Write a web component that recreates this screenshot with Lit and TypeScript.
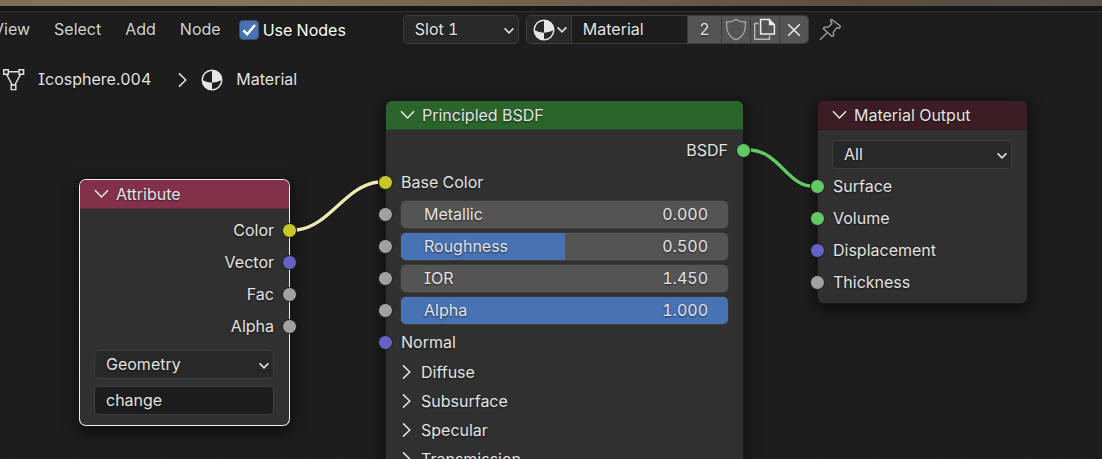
import { LitElement, html, svg, css, nothing } from "lit";
import { customElement, property } from "lit/decorators.js";
import { classMap } from "lit/directives/class-map.js";

type SocketKind = "color" | "vector" | "value" | "shader";

const base = css`
  *,
  *::before,
  *::after {
    box-sizing: border-box;
  }
  button,
  input,
  select {
    margin: 0;
    font: inherit;
    font-feature-settings: inherit;
    color: inherit;
    text-shadow: inherit;
    border-radius: 0;
  }
  button {
    padding: 0;
    border: 0;
    background: none;
    cursor: pointer;
  }
  svg {
    display: block;
    flex: none;
  }
`;

const materialIcon = html`<svg width="22" height="22" viewBox="0 0 22 22" aria-hidden="true">
  <circle cx="11" cy="11" r="9.8" fill="none" stroke="#e6e6e6" stroke-width="1.4" />
  <path d="M11 1.2A9.8 9.8 0 0 1 20.8 11 Q16 13.6 11 13.8Z" fill="#e6e6e6" />
  <path d="M11 20.8A9.8 9.8 0 0 1 1.2 11 Q6 13.6 11 13.8Z" fill="#e6e6e6" />
</svg>`;

const chevron = html`<svg width="12" height="8" viewBox="0 0 12 8" aria-hidden="true">
  <path d="M1.6 1.4 6 5.8 10.4 1.4" fill="none" stroke="#e0e0e0" stroke-width="1.6" />
</svg>`;

/** Drop-down with the editor's own arrow. */
@customElement("ui-dropdown")
export class UiDropdown extends LitElement {
  @property() label = "";
  @property({ type: Array }) options: string[] = [];

  static styles = [
    base,
    css`
      :host {
        display: grid;
        align-items: center;
      }
      .select {
        grid-area: 1 / 1;
        width: 100%;
        height: 29px;
        padding: 0 28px 2px 11px;
        appearance: none;
        color: #e3e3e3;
        background: #282828;
        border: 1px solid #3d3d3d;
        border-radius: 5px;
      }
      .arrow {
        grid-area: 1 / 1;
        justify-self: end;
        margin-right: 4px;
        padding-top: 2px;
        pointer-events: none;
      }
    `,
  ];

  render() {
    return html`<select class="select" aria-label=${this.label}>
        ${this.options.map((o) => html`<option>${o}</option>`)}
      </select>
      <span class="arrow">${chevron}</span>`;
  }
}

/** One row of a node: a socket on its edge and a label or a value field. */
@customElement("node-row")
export class NodeRow extends LitElement {
  @property() kind: SocketKind = "value";
  @property() label = "";
  @property() value = "";
  @property({ type: Number }) fill = 0;
  @property({ type: Boolean }) output = false;

  static styles = [
    base,
    css`
      :host {
        position: relative;
        display: flex;
        align-items: center;
        height: 32px;
        padding: 0 15px;
      }
      .socket {
        position: absolute;
        left: -8px;
        width: 15px;
        height: 15px;
        border: 1px solid #161616;
        border-radius: 50%;
      }
      .socket.output {
        left: auto;
        right: -8px;
      }
      .color {
        background: #c7c729;
      }
      .vector {
        background: #6363c7;
      }
      .value {
        background: #a1a1a1;
      }
      .shader {
        background: #63c763;
      }
      .label {
        flex: 1;
      }
      .label.output {
        text-align: right;
      }
      .field {
        position: relative;
        flex: 1;
        display: flex;
        align-items: center;
        height: 27px;
        padding: 0 20px 0 23px;
        background: #545454;
        border-radius: 5px;
        box-shadow: 0 0 0 1px #3a3a3a;
        overflow: hidden;
      }
      .bar {
        position: absolute;
        inset: 0 auto 0 0;
        background: #4772b3;
      }
      .name {
        position: relative;
        flex: 1;
      }
      .number {
        position: relative;
        width: 80px;
        padding: 0;
        text-align: right;
        background: none;
        border: 0;
      }
    `,
  ];

  render() {
    return html`
      <span class=${classMap({ socket: true, [this.kind]: true, output: this.output })}></span>
      ${this.value
        ? html`<label class="field">
            ${this.fill ? html`<span class="bar" style="width:${this.fill * 100}%"></span>` : nothing}
            <span class="name">${this.label}</span>
            <input class="number" type="text" inputmode="decimal" .value=${this.value} />
          </label>`
        : html`<span class=${classMap({ label: true, output: this.output })}>${this.label}</span>`}
    `;
  }
}

@customElement("node-frame")
export class NodeFrame extends LitElement {
  @property() heading = "";
  @property({ type: Boolean, reflect: true }) selected = false;

  static styles = [
    base,
    css`
      :host {
        display: block;
        background: #303030;
        border-radius: 6px;
        box-shadow: 0 0 0 1px #191919, 0 4px 14px 4px rgb(0 0 0 / 50%);
      }
      :host([selected]) {
        box-shadow: 0 0 0 1px #ededed, 0 4px 14px 4px rgb(0 0 0 / 50%);
      }
      .title {
        display: flex;
        align-items: center;
        gap: 7px;
        width: 100%;
        height: 29px;
        padding: 0 14px;
        background: var(--title);
        border-bottom: 1px solid rgb(0 0 0 / 20%);
        border-radius: 6px 6px 0 0;
      }
    `,
  ];

  render() {
    return html`<button class="title" aria-expanded="true">
        <svg width="15" height="10" viewBox="0 0 15 10" aria-hidden="true">
          <path d="M1 1.2 7.5 7.9 14 1.2" fill="none" stroke="#e6e6e6" stroke-width="1.5" />
        </svg>
        ${this.heading}
      </button>
      <slot></slot>`;
  }
}

@customElement("app-root")
export class AppRoot extends LitElement {
  static styles = [
    base,
    css`
      :host {
        display: grid;
        grid-template-rows: auto auto 1fr;
        height: 100vh;
        overflow: hidden;
        color: #e3e3e3;
        background: #1d1d1d;
        font: 16px/20px Inter, "Liberation Sans", sans-serif;
        font-feature-settings: "cv08", "tnum";
        text-shadow: 0 1px 2px rgb(0 0 0 / 60%);
      }
      .viewport {
        height: 12px;
        background: linear-gradient(90deg, #80705b, #84745d 22%, #7b6a52 33%, #6a5d4a 57%, #5c4d40 78%, #554f4a);
        border-bottom: 1px solid #303030;
        box-shadow: inset 0 -5px #161616;
      }
      .header {
        display: flex;
        align-items: center;
        height: 35px;
        margin-left: -19px;
        white-space: nowrap;
      }
      .menu {
        padding: 0 12px 2px;
        color: #d3d3d3;
      }
      .toggle {
        display: flex;
        align-items: center;
        gap: 4px;
        margin: 0 57px 0 6px;
        color: #fff;
      }
      .check {
        display: grid;
      }
      .check > * {
        grid-area: 1 / 1;
      }
      .box {
        width: 20px;
        height: 20px;
        appearance: none;
        background: #4772b3;
        border: 1px solid #3d4f6e;
        border-radius: 4px;
      }
      .tick {
        pointer-events: none;
      }
      .slot {
        width: 116px;
        margin-right: 7px;
      }
      .datablock {
        display: flex;
        height: 29px;
        border: 1px solid #3d3d3d;
        border-radius: 5px;
        overflow: hidden;
      }
      .browse {
        display: flex;
        align-items: center;
        gap: 1px;
        width: 44px;
        padding-left: 6px;
        background: #282828;
      }
      .name {
        width: 116px;
        padding: 0 11px 2px;
        background: #1d1d1d;
        border: 0;
        border-left: 1px solid #3d3d3d;
      }
      .action {
        display: grid;
        place-items: center;
        width: 29px;
        background: #545454;
        border-left: 1px solid #3d3d3d;
      }
      .users {
        width: 34px;
        padding-bottom: 2px;
      }
      .pin {
        margin-left: 10px;
      }
      .canvas {
        position: relative;
        min-height: 0;
        overflow: hidden;
      }
      .grid,
      .wires {
        position: absolute;
        inset: 0;
        width: 100%;
        height: 100%;
      }
      .crumbs {
        position: relative;
        display: flex;
        align-items: center;
        padding: 21px 2px;
      }
      .crumb {
        margin-left: 13px;
        padding-bottom: 2px;
      }
      .next {
        margin: 0 14px 0 27px;
      }
      .node {
        position: absolute;
      }
      .attribute {
        left: 80px;
        top: 133px;
        width: 209px;
        --title: #83314a;
      }
      .principled {
        left: 386px;
        top: 54px;
        width: 357px;
        --title: #2b652b;
      }
      .output {
        left: 818px;
        top: 54px;
        width: 209px;
        --title: #3c1d26;
      }
      .rows {
        padding-top: 4px;
      }
      .attribute .rows {
        padding-top: 5px;
      }
      .fields {
        display: grid;
        gap: 7px;
        padding: 8px 15px 10px 14px;
      }
      .text {
        width: 100%;
        height: 29px;
        padding: 0 11px 2px;
        background: #1d1d1d;
        border: 1px solid #3d3d3d;
        border-radius: 5px;
      }
      .target {
        padding: 10px 15px 1px 14px;
      }
      .inputs {
        padding-bottom: 5px;
      }
      .panel {
        display: flex;
        align-items: center;
        gap: 10px;
        width: 100%;
        height: 29px;
        padding: 0 16px 2px;
      }
    `,
  ];

  private sideArrow = html`<svg width="9" height="16" viewBox="0 0 9 16" aria-hidden="true">
    <path d="M1 1.4 7.8 8 1 14.6" fill="none" stroke="#e3e3e3" stroke-width="1.5" />
  </svg>`;

  private wire(d: string, color: string) {
    return svg`<path d=${d} fill="none" stroke="#141414" stroke-width="5" />
      <path d=${d} fill="none" stroke=${color} stroke-width="3.4" />`;
  }

  render() {
    return html`
      <div class="viewport"></div>
      <header class="header">
        ${["View", "Select", "Add", "Node"].map((m) => html`<button class="menu">${m}</button>`)}
        <label class="toggle">
          <span class="check">
            <input class="box" type="checkbox" checked />
            <svg class="tick" width="20" height="20" viewBox="0 0 20 20" aria-hidden="true">
              <path d="M4.4 10.4 8.2 14.2 16 5" fill="none" stroke="#fff" stroke-width="2.4" />
            </svg>
          </span>
          Use Nodes
        </label>
        <ui-dropdown class="slot" label="Slot" .options=${["Slot 1"]}></ui-dropdown>
        <div class="datablock">
          <button class="browse" aria-label="Browse material">${materialIcon}${chevron}</button>
          <input class="name" aria-label="Material name" value="Material" />
          <button class="action users">2</button>
          <button class="action" aria-label="Fake user">
            <svg width="22" height="23" viewBox="0 0 22 23" aria-hidden="true">
              <path
                d="M11 1.2C8.6 3.1 5.3 4 1.6 4 1.2 12.6 3 18.6 11 21.8 19 18.6 20.8 12.6 20.4 4 16.7 4 13.4 3.1 11 1.2Z"
                fill="none" stroke="#a6a6a6" stroke-width="1.4" />
            </svg>
          </button>
          <button class="action" aria-label="New material">
            <svg width="23" height="23" viewBox="0 0 23 23" aria-hidden="true">
              <path d="M5.5 5.5H1.7V21.3H16.5V17.6" fill="none" stroke="#b8b8b8" stroke-width="1.4" />
              <path d="M7.6 1.5H16.2L21.4 6.7V16H7.6Z" fill="none" stroke="#ececec" stroke-width="1.5" />
              <path d="M15.8 1V7.2H22L15.8 1Z" fill="#ececec" />
            </svg>
          </button>
          <button class="action" aria-label="Unlink">
            <svg width="14" height="14" viewBox="0 0 14 14" aria-hidden="true">
              <path d="M1.2 1.2 12.8 12.8M12.8 1.2 1.2 12.8" stroke="#ececec" stroke-width="1.5" />
            </svg>
          </button>
        </div>
        <button class="pin" aria-label="Pin">
          <svg width="23" height="23" viewBox="0 0 23 23" aria-hidden="true">
            <path
              d="M12.4 1.4 21.4 8 20.4 10.2 18 9.6 14.2 14.4 14.8 17.2 13 18.6 4.2 10.6 5.4 9.2 9.4 9 13 5.4 11.4 3ZM8.4 14.6 1 21.8"
              fill="none" stroke="#9c9c9c" stroke-width="1.4" stroke-linejoin="round" />
          </svg>
        </button>
      </header>

      <main class="canvas">
        <svg class="grid" aria-hidden="true">
          <defs>
            <pattern id="dots" x="12" y="23" width="29.8" height="29.8" patternUnits="userSpaceOnUse">
              <rect x="1" y="1" width="1" height="1" fill="#262626" />
            </pattern>
          </defs>
          <rect width="100%" height="100%" fill="url(#dots)" />
        </svg>

        <nav class="crumbs">
          <svg width="23" height="23" viewBox="0 0 23 23" aria-hidden="true">
            <g fill="none" stroke="#e3e3e3" stroke-width="1.4">
              <path d="M6.5 3.7H17M4.6 6.4 10.2 17M18.6 6.4 12.8 17" />
              <path d="M1.7 1.7H6.3V6.3H1.7ZM17 1.7H21.6V6.3H17ZM9.2 17H13.8V21.6H9.2Z" />
            </g>
          </svg>
          <span class="crumb">Icosphere.004</span>
          <span class="next">${this.sideArrow}</span>
          ${materialIcon}
          <span class="crumb">Material</span>
        </nav>

        <node-frame class="node attribute" heading="Attribute" selected>
          <div class="rows">
            <node-row output kind="color" label="Color"></node-row>
            <node-row output kind="vector" label="Vector"></node-row>
            <node-row output kind="value" label="Fac"></node-row>
            <node-row output kind="value" label="Alpha"></node-row>
          </div>
          <div class="fields">
            <ui-dropdown label="Attribute type" .options=${["Geometry"]}></ui-dropdown>
            <input class="text" aria-label="Attribute name" value="change" />
          </div>
        </node-frame>

        <node-frame class="node principled" heading="Principled BSDF">
          <div class="rows">
            <node-row output kind="shader" label="BSDF"></node-row>
            <node-row kind="color" label="Base Color"></node-row>
            <node-row kind="value" label="Metallic" value="0.000"></node-row>
            <node-row kind="value" label="Roughness" value="0.500" fill="0.5"></node-row>
            <node-row kind="value" label="IOR" value="1.450"></node-row>
            <node-row kind="value" label="Alpha" value="1.000" fill="1"></node-row>
            <node-row kind="vector" label="Normal"></node-row>
          </div>
          ${["Diffuse", "Subsurface", "Specular", "Transmission"].map(
            (p) => html`<button class="panel" aria-expanded="false">${this.sideArrow}${p}</button>`
          )}
        </node-frame>

        <node-frame class="node output" heading="Material Output">
          <div class="target">
            <ui-dropdown label="Target" .options=${["All"]}></ui-dropdown>
          </div>
          <div class="inputs">
            <node-row kind="shader" label="Surface"></node-row>
            <node-row kind="shader" label="Volume"></node-row>
            <node-row kind="vector" label="Displacement"></node-row>
            <node-row kind="value" label="Thickness"></node-row>
          </div>
        </node-frame>

        <svg class="wires" aria-hidden="true" pointer-events="none">
          ${this.wire("M297 183C330 179 345 139 378 135", "#ebe9b4")}
          ${this.wire("M751 103C778 105 788 137 810 139", "#63c763")}
        </svg>
      </main>
    `;
  }
}
